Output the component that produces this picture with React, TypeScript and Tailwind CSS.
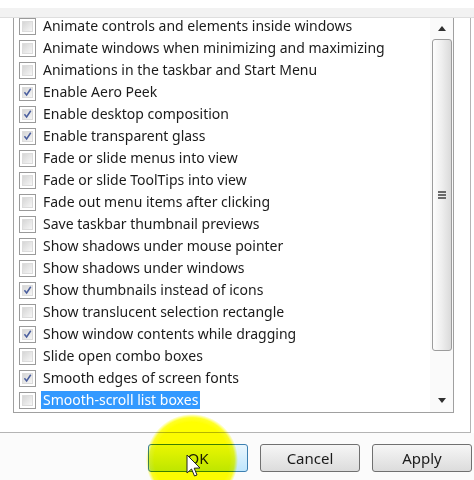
import React from 'react';

type Item = { label: string; checked: boolean };

const items: Item[] = [
  { label: 'Animate controls and elements inside windows', checked: false },
  { label: 'Animate windows when minimizing and maximizing', checked: false },
  { label: 'Animations in the taskbar and Start Menu', checked: false },
  { label: 'Enable Aero Peek', checked: true },
  { label: 'Enable desktop composition', checked: true },
  { label: 'Enable transparent glass', checked: true },
  { label: 'Fade or slide menus into view', checked: false },
  { label: 'Fade or slide ToolTips into view', checked: false },
  { label: 'Fade out menu items after clicking', checked: false },
  { label: 'Save taskbar thumbnail previews', checked: false },
  { label: 'Show shadows under mouse pointer', checked: false },
  { label: 'Show shadows under windows', checked: false },
  { label: 'Show thumbnails instead of icons', checked: true },
  { label: 'Show translucent selection rectangle', checked: false },
  { label: 'Show window contents while dragging', checked: true },
  { label: 'Slide open combo boxes', checked: false },
  { label: 'Smooth edges of screen fonts', checked: true },
  { label: 'Smooth-scroll list boxes', checked: false },
];

const CheckBox = ({ checked }: { checked: boolean }) => (
  <div className="w-[17px] h-[17px] shrink-0 border border-[#9a9a9a] bg-white p-[2px]">
    <div className="w-full h-full bg-gradient-to-br from-[#d6d6d6] to-[#f6f6f6] border border-[#dcdcdc] flex items-center justify-center">
      {checked && (
        <svg width="10" height="10" viewBox="0 0 10 10">
          <path d="M1.6 5.4 L4 8.2 L8.6 1.4" fill="none" stroke="#4a5e9e" strokeWidth="1.7" />
        </svg>
      )}
    </div>
  </div>
);

const Row = ({ item, selected }: { item: Item; selected: boolean }) => (
  <div className="h-[22px] flex items-center pl-[5px]">
    <CheckBox checked={item.checked} />
    <span
      className={`ml-[5px] px-[2px] h-[18px] leading-[18px] whitespace-nowrap ${
        selected ? 'bg-[#3399ff] text-white' : 'text-[#1b1b1b]'
      }`}
    >
      {item.label}
    </span>
  </div>
);

const Arrow = ({ up }: { up: boolean }) => (
  <svg width="8" height="5" viewBox="0 0 8 5">
    <path d={up ? 'M0 5 L4 0 L8 5 Z' : 'M0 0 L8 0 L4 5 Z'} fill="#303030" />
  </svg>
);

const ScrollBar = () => (
  <div className="w-[23px] shrink-0 bg-[#fafafa] flex flex-col items-center">
    <div className="h-[21px] flex items-center justify-center">
      <Arrow up />
    </div>
    <div className="w-[20px] h-[312px] rounded-[3px] border border-[#9c9c9c] bg-gradient-to-r from-[#fdfdfd] via-[#eeeeee] to-[#dadada] flex items-center justify-center">
      <div className="flex flex-col gap-[1px]">
        <div className="w-[8px] h-[2px] bg-[#6a6a6a]" />
        <div className="w-[8px] h-[2px] bg-[#6a6a6a]" />
        <div className="w-[8px] h-[2px] bg-[#6a6a6a]" />
      </div>
    </div>
    <div className="flex-1" />
    <div className="h-[20px] flex items-center justify-center pb-[4px]">
      <Arrow up={false} />
    </div>
  </div>
);

const Button = ({ label, hot }: { label: string; hot?: boolean }) => (
  <div
    className={`w-[100px] h-[28px] rounded-[3px] border flex items-center justify-center text-[15px] text-[#1b1b1b] ${
      hot
        ? 'border-[#3c7fb1] bg-gradient-to-b from-[#eaf6fd] to-[#bee6fd]'
        : 'border-[#707070] bg-gradient-to-b from-[#f6f6f6] to-[#dcdcdc]'
    }`}
  >
    {label}
  </div>
);

export default function App() {
  return (
    <div
      className="w-[474px] h-[480px] bg-white overflow-hidden relative flex flex-col text-[14px]"
      style={{ fontFamily: '"Noto Sans", "Open Sans", sans-serif' }}
    >
      <div className="h-[8px] shrink-0 bg-white" />
      <div className="h-[10px] shrink-0 bg-[#f2f2f2] border-b border-[#dedede]" />
      <div className="flex shrink-0">
        <div className="w-[471px] h-[415px] border-r border-b border-[#b4b4b4] pl-[13px] bg-white">
          <div className="w-[441px] h-[395px] border-l border-r border-b border-[#a0a0a0] flex overflow-hidden">
            <div className="flex-1 flex flex-col -mt-[3px]">
              {items.map((item, i) => (
                <Row key={item.label} item={item} selected={i === items.length - 1} />
              ))}
            </div>
            <ScrollBar />
          </div>
        </div>
      </div>
      <div className="flex-1 bg-[#fbfbfb] flex justify-end gap-[12px] pr-[2px] pt-[11px]">
        <Button label="OK" hot />
        <Button label="Cancel" />
        <Button label="Apply" />
      </div>
      <div
        className="absolute left-[146px] top-[414px] w-[92px] h-[92px] rounded-full mix-blend-multiply pointer-events-none"
        style={{ background: 'radial-gradient(circle closest-side, rgba(255,255,0,1) 82%, rgba(255,255,0,0.85) 92%, rgba(255,255,0,0) 100%)' }}
      />
      <svg className="absolute left-[186px] top-[454px]" width="16" height="26" viewBox="0 0 16 26">
        <path d="M1 1 L1 19 L5.5 15 L8.5 22 L11 21 L8.2 14.2 L14 14 Z" fill="white" stroke="#222" strokeWidth="1" />
      </svg>
    </div>
  );
}
